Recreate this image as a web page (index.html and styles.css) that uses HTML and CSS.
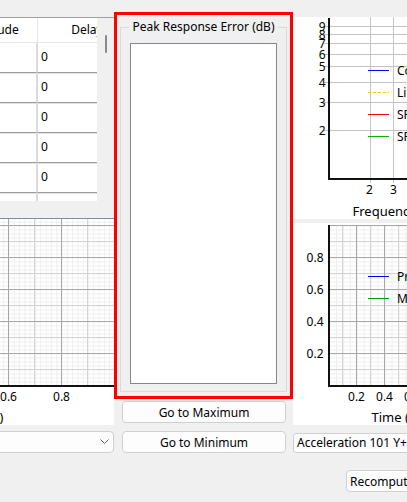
FILE: index.html
```html
<!DOCTYPE html>
<html lang="en">

<head>
    <meta charset="UTF-8">
    <meta name="viewport" content="width=device-width, initial-scale=1.0">
    <title>Shock Response Review</title>
    <link rel="stylesheet" href="styles.css">
</head>

<body>

    <div class="window">

        <!-- left: channel table, time history, channel picker -->
        <div class="left-col">
            <div class="table">
                <div class="table-view">
                    <div class="table-grid">
                        <div class="table-head">Magnitude</div>
                        <div class="table-head">Delay</div>
                        <div class="table-cell key"></div><div class="table-cell">0</div>
                        <div class="table-cell key"></div><div class="table-cell">0</div>
                        <div class="table-cell key"></div><div class="table-cell">0</div>
                        <div class="table-cell key"></div><div class="table-cell">0</div>
                        <div class="table-cell key"></div><div class="table-cell">0</div>
                        <div class="table-cell key"></div><div class="table-cell">0</div>
                    </div>
                </div>
                <div class="scrollbar"><div class="thumb"></div></div>
            </div>

            <div class="plot plot-left">
                <svg width="114" height="206" viewBox="0 0 114 206">
                    <defs>
                        <pattern id="minor-left" patternUnits="userSpaceOnUse" x="8.5" y="6.5" width="5.3" height="4">
                            <path d="M0.5 0V4M0 0.5H5.3" stroke="#efefef" fill="none"/>
                        </pattern>
                    </defs>
                    <rect x="0" y="0" width="114" height="166" fill="url(#minor-left)"/>
                    <path class="grid-light" d="M34.5 0V166M87.5 0V166M0 150.5H114M0 118.5H114M0 86.5H114M0 54.5H114M0 22.5H114"/>
                    <path class="grid-dark" d="M8.5 0V166M61.5 0V166M0 134.5H114M0 102.5H114M0 70.5H114M0 38.5H114M0 6.5H114"/>
                    <path class="axis" d="M0 167H114"/>
                    <text x="8.5" y="182" text-anchor="middle">0.6</text>
                    <text x="61.5" y="182" text-anchor="middle">0.8</text>
                    <text class="title" x="3.5" y="203" text-anchor="end">Time (s)</text>
                </svg>
            </div>

            <div class="combo">
                <svg width="9" height="6" viewBox="0 0 9 6">
                    <path d="M0.5 0.5L4.5 4.5L8.5 0.5" fill="none" stroke="#5c5c5c"/>
                </svg>
            </div>
        </div>

        <!-- middle: error list with navigation -->
        <div class="mid-col">
            <div class="highlight">
                <fieldset class="group">
                    <legend>Peak Response Error (dB)</legend>
                    <div class="list"></div>
                </fieldset>
            </div>
            <button class="btn">Go to Maximum</button>
            <button class="btn">Go to Minimum</button>
        </div>

        <!-- right: spectrum, time response, channel -->
        <div class="right-col">
            <div class="plot plot-freq">
                <svg width="114" height="202" viewBox="0 0 114 202">
                    <path class="grid-log" d="M31 113.5H114M31 85.5H114M31 65.5H114M31 49.5H114M31 37.5H114M31 26.5H114M31 17.5H114M31 9.5H114M77.5 0V166M100.5 0V166"/>
                    <path class="axis" d="M36 1V163M35 162H114"/>
                    <text x="32.5" y="13.8" text-anchor="end">9</text>
                    <text x="32.5" y="21.8" text-anchor="end">8</text>
                    <text x="32.5" y="30.8" text-anchor="end">7</text>
                    <text x="32.5" y="41.8" text-anchor="end">6</text>
                    <text x="32.5" y="53.8" text-anchor="end">5</text>
                    <text x="32.5" y="69.8" text-anchor="end">4</text>
                    <text x="32.5" y="89.8" text-anchor="end">3</text>
                    <text x="32.5" y="117.8" text-anchor="end">2</text>
                    <text x="76.5" y="177" text-anchor="middle">2</text>
                    <text x="100.5" y="177" text-anchor="middle">3</text>
                    <text class="title" x="59.5" y="199">Frequency (Hz)</text>

                    <path d="M75 53.5H96" stroke="#0000ff"/>
                    <path d="M75 75.5H96" stroke="#ffc800" stroke-dasharray="3 2"/>
                    <path d="M75 97.5H96" stroke="#ff0000"/>
                    <path d="M75 119.5H96" stroke="#00b400"/>
                    <text x="104" y="58">Computed</text>
                    <text x="104" y="80">Limits</text>
                    <text x="104" y="102">SRS Upper</text>
                    <text x="104" y="124">SRS Lower</text>
                </svg>
            </div>

            <div class="plot plot-time">
                <svg width="114" height="202" viewBox="0 0 114 202">
                    <defs>
                        <pattern id="minor-time" patternUnits="userSpaceOnUse" x="36" y="2.5" width="6.95" height="4">
                            <path d="M0.5 0V4M0 0.5H6.95" stroke="#efefef" fill="none"/>
                        </pattern>
                    </defs>
                    <rect x="36" y="2" width="78" height="161" fill="url(#minor-time)"/>
                    <path class="grid-light" d="M49.5 2V162M77.5 2V162M105.5 2V162M36 146.5H114M36 114.5H114M36 82.5H114M36 50.5H114M36 18.5H114"/>
                    <path class="grid-dark" d="M63.5 2V162M91.5 2V162M36 130.5H114M36 98.5H114M36 66.5H114M36 34.5H114M36 2.5H114"/>
                    <path class="axis" d="M36 2V164M35 163H114"/>
                    <text x="30.5" y="38.8" text-anchor="end">0.8</text>
                    <text x="30.5" y="70.8" text-anchor="end">0.6</text>
                    <text x="30.5" y="102.8" text-anchor="end">0.4</text>
                    <text x="30.5" y="134.8" text-anchor="end">0.2</text>
                    <text x="63.5" y="178" text-anchor="middle">0.2</text>
                    <text x="91.5" y="178" text-anchor="middle">0.4</text>
                    <text x="119.5" y="178" text-anchor="middle">0.6</text>
                    <text class="title" x="78.5" y="199">Time (s)</text>

                    <path d="M75 53.5H96" stroke="#0000ff"/>
                    <path d="M75 75.5H96" stroke="#00a000"/>
                    <text x="104" y="58">Predicted</text>
                    <text x="104" y="80">Measured</text>
                </svg>
            </div>

            <div class="field">Acceleration 101 Y+</div>

            <div class="actions">
                <button class="btn">Recompute</button>
            </div>
        </div>

    </div>

</body>

</html>
```

FILE: styles.css
```css
body {
    margin: 0;
    background-color: #f0f0f0;
    font-family: 'Noto Sans', 'Open Sans', sans-serif;
    font-size: 12px;
    color: #000;
    overflow: hidden;
}

.window {
    display: flex;
    width: 407px;
    height: 502px;
    overflow: hidden;
}

.left-col,
.right-col {
    flex: none;
    width: 114px;
    padding-top: 17px;
    box-sizing: border-box;
    overflow: hidden;
}

/* table */

.table {
    display: flex;
    height: 184px;
    border-top: 1px solid #a0a0a0;
    box-sizing: border-box;
}

.table-view {
    width: 97px;
    background-color: #fff;
    overflow: hidden;
}

.table-grid {
    display: grid;
    grid-template-columns: 99px 98px;
    margin-left: -61px;
}

.table-head {
    height: 25px;
    line-height: 24px;
    text-align: center;
    border-bottom: 1px solid #e5e5e5;
    box-sizing: border-box;
}

.table-head:first-child {
    border-right: 1px solid #e5e5e5;
}

.table-cell {
    height: 30px;
    line-height: 28px;
    padding-left: 3px;
    border-bottom: 1px solid #9d9d9d;
    box-shadow: 0 1px 0 #e2e2e2;
    box-sizing: border-box;
}

.table-cell.key {
    border-right: 2px solid #dcdcdc;
}

.scrollbar {
    flex: 1;
}

.thumb {
    width: 2px;
    height: 18px;
    margin: 17px 0 0 8px;
    background-color: #8a8a8a;
    border-radius: 1px;
}

/* plots */

.plot {
    background-color: #fff;
}

.plot svg {
    display: block;
}

.plot text {
    font-family: 'Noto Sans', 'Open Sans', sans-serif;
    font-size: 12px;
    fill: #000;
}

.plot text.title {
    font-size: 13px;
}

.grid-light {
    stroke: #d4d4d4;
    fill: none;
}

.grid-dark {
    stroke: #a8a8a8;
    fill: none;
}

.grid-log {
    stroke: #c4c4c4;
    fill: none;
}

.axis {
    stroke: #111;
    stroke-width: 2;
    fill: none;
}

.plot-left {
    margin-top: 17px;
    height: 207px;
    border-top: 1px solid #878d96;
    box-sizing: border-box;
}

.plot-freq {
    height: 202px;
}

.plot-time {
    margin-top: 4px;
    height: 202px;
}

/* inputs */

.combo {
    display: flex;
    justify-content: flex-end;
    align-items: center;
    height: 22px;
    margin: 6px 0 0 -20px;
    padding-right: 4px;
    background-color: #fdfdfd;
    border: 1px solid #d0d0d0;
    border-radius: 4px;
    box-sizing: border-box;
}

.field {
    width: 200px;
    height: 20px;
    margin-top: 8px;
    padding-left: 3px;
    line-height: 18px;
    background-color: #fcfcfc;
    border: 1px solid #d0d0d0;
    border-radius: 3px;
    box-sizing: border-box;
    white-space: nowrap;
}

.btn {
    display: block;
    height: 22px;
    padding: 0;
    font: inherit;
    color: #000;
    background-color: #fdfdfd;
    border: 1px solid #d0d0d0;
    border-radius: 4px;
    box-sizing: border-box;
}

/* middle panel */

.mid-col {
    flex: none;
    width: 179px;
    padding-top: 12px;
    box-sizing: border-box;
}

.highlight {
    display: flex;
    flex-direction: column;
    height: 387px;
    padding: 4px 3px;
    border: 3px solid #ff0000;
    box-sizing: border-box;
}

.group {
    display: flex;
    flex-direction: column;
    flex: 1;
    min-width: 0;
    margin: 0;
    padding: 0 0 7px;
    border: 1px solid #dadada;
}

.group legend {
    margin: 0 auto;
    padding: 0 3px;
    line-height: 16px;
    white-space: nowrap;
}

.list {
    flex: 1;
    margin: 8px 9px 0;
    background-color: #fff;
    border: 1px solid #828790;
}

.mid-col .btn {
    width: 164px;
    margin: 2px 0 0 8px;
}

.mid-col .btn + .btn {
    margin-top: 8px;
}

.actions {
    padding: 17px 0 0 53px;
}

.actions .btn {
    width: 100px;
    padding-left: 3px;
    text-align: left;
}
```
